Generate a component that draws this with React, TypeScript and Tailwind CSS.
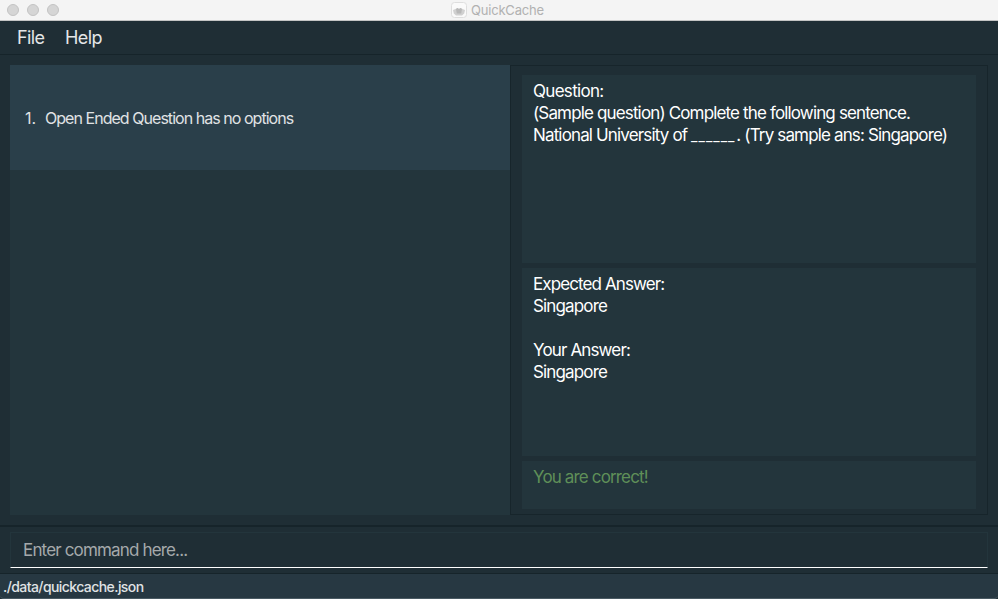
import React from "react";

function TitleBar() {
  return (
    <header className="relative flex h-[21px] shrink-0 items-center border-b border-[#c4c4c4] bg-[#f4f4f4]">
      <div className="flex gap-2 pl-[7px]">
        {[0, 1, 2].map((i) => (
          <span key={i} className="size-3 rounded-full border border-[#c3c3c3] bg-[#d5d5d5]" />
        ))}
      </div>
      <div className="absolute inset-y-0 left-[451px] flex items-center gap-[4px]">
        <svg width="16" height="16" viewBox="0 0 16 16">
          <rect x="0.5" y="0.5" width="15" height="15" rx="3" fill="#fafafa" stroke="#dedede" />
          <path d="M2 8 4.500 7 6.500 6 8 7l1.500-1 2 1L14 8l-.8 3.500-2.200 2H5l-2.200-2z" fill="#d0d0d0" />
          <path d="M5 7 6.500 6 8 7l1.500-1L11 7l-.8 4.500H5.800z" fill="#b8b8b8" />
        </svg>
        <span className="text-[13px] leading-4 tracking-[-0.2px] text-[#b1b1b1]">QuickCache</span>
      </div>
    </header>
  );
}

function MenuBar() {
  return (
    <nav className="flex h-[34px] shrink-0 items-center border-b border-[#16242a] pl-[17px] text-[18px] tracking-[-0.6px] text-[#e4e6e7]">
      <span className="w-12">File</span>
      <span>Help</span>
    </nav>
  );
}

export default function App() {
  return (
    <div className="flex h-[599px] w-[998px] flex-col overflow-hidden whitespace-pre bg-[#1f2e35] font-['Inter',sans-serif]">
      <TitleBar />
      <MenuBar />
      <main className="flex h-[470px] shrink-0 px-[10px] pt-[10px] pb-[10px]">
        <section className="w-[500px] bg-[#23353c]">
          <div className="flex h-[105px] items-center bg-[#2a3f4a] pl-[15px] text-[16px] tracking-[-0.96px] text-[#e0e3e5]">
            <span className="w-5 tracking-normal">1.</span>
            <span>Open Ended Question has no options</span>
          </div>
        </section>
        <section className="flex w-[478px] flex-col gap-[5px] border border-[#17252b] pt-[9px] pr-[11px] pl-[11px] text-[17px] leading-[22px] tracking-[-0.85px] text-white">
          <div className="h-[188px] bg-[#23353c] pt-[5px] pl-[11px]">
            <p className="tracking-[-0.7px]">Question:</p>
            <p>(Sample question) Complete the following sentence.</p>
            <p>
              National University of <span className="mr-[-3px] text-[14px] tracking-[1px]">______</span> . (Try sample ans: Singapore)
            </p>
          </div>
          <div className="h-[188px] bg-[#23353c] pt-[5px] pl-[11px]">
            <p className="tracking-[-0.9px]">Expected Answer:</p>
            <p>Singapore</p>
            <p className="mt-[22px]">Your Answer:</p>
            <p>Singapore</p>
          </div>
          <div className="h-[48px] bg-[#23353c] pt-[5px] pl-[11px] text-[#5f8f58]">
            <p>You are correct!</p>
          </div>
        </section>
      </main>
      <div className="h-[49px] shrink-0 border-t-2 border-b border-[#16242a] px-[10px] pt-[5px]">
        <div className="flex h-[36px] items-center border border-[#23353c] border-b-white pt-[2px] pl-[12px] text-[17px] tracking-[-0.84px] text-[#a5a9ab]">
          Enter command here...
        </div>
      </div>
      <footer className="flex h-[25px] shrink-0 items-center rounded-b-[4px] border-b border-[#4a5a63] bg-[#273842] pl-[3px] text-[14px] font-medium tracking-[-0.58px] text-[#e0e3e5]">
        ./data/quickcache.json
      </footer>
    </div>
  );
}
